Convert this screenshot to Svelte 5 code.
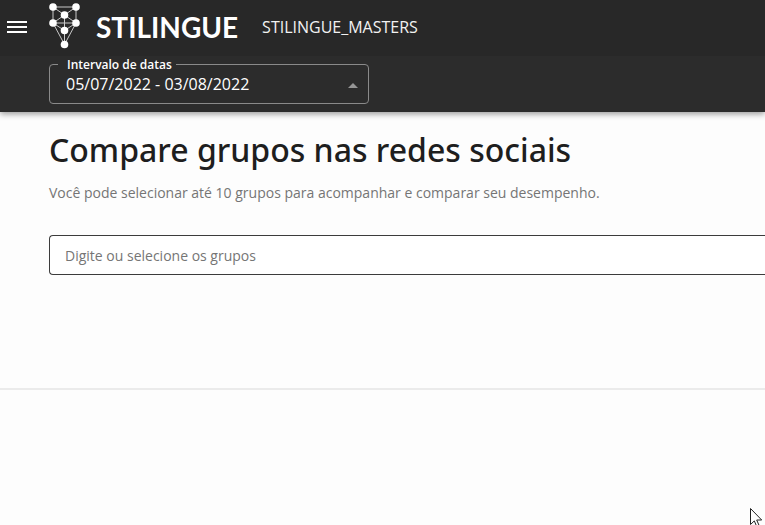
<script>
  let groups = $state('');
  let range = $state('05/07/2022 - 03/08/2022');

  const nodes = [
    [4, 4], [27, 4], [15.5, 12], [4, 20], [27, 20], [15.5, 27.5], [15.5, 41.5]
  ];
  const links = [
    [0, 1], [0, 3], [1, 4], [0, 2], [1, 2], [2, 3], [2, 4], [3, 4],
    [2, 5], [3, 5], [4, 5], [5, 6], [3, 6], [4, 6]
  ];
</script>

<div class="page">
  <header>
    <div class="topbar">
      <button class="menu" aria-label="Abrir menu">
        <svg width="20" height="14" viewBox="0 0 20 14" aria-hidden="true">
          <path d="M0 2h20M0 7h20M0 12h20" stroke="#fff" stroke-width="2" />
        </svg>
      </button>
      <a class="brand" href="#inicio">
        <svg width="31" height="46" viewBox="0 0 31 46" aria-hidden="true">
          {#each links as [a, b]}
            <line x1={nodes[a][0]} y1={nodes[a][1]} x2={nodes[b][0]} y2={nodes[b][1]} />
          {/each}
          {#each nodes as [x, y]}
            <circle cx={x} cy={y} r="3.8" />
          {/each}
        </svg>
        <span>STILINGUE</span>
      </a>
      <span class="account">STILINGUE_MASTERS</span>
    </div>
    <div class="filters">
      <fieldset>
        <legend id="range-label">Intervalo de datas</legend>
        <button class="range" aria-haspopup="dialog" aria-labelledby="range-label range-value">
          <span id="range-value">{range}</span>
          <svg width="10" height="8" viewBox="0 0 10 8" aria-hidden="true">
            <path d="M0 8l5-5 5 5z" fill="#969696" />
          </svg>
        </button>
      </fieldset>
    </div>
  </header>

  <main>
    <section class="compare">
      <h1>Compare grupos nas redes sociais</h1>
      <p>Você pode selecionar até 10 grupos para acompanhar e comparar seu desempenho.</p>
      <input
        type="text"
        aria-label="Grupos"
        placeholder="Digite ou selecione os grupos"
        bind:value={groups}
      />
    </section>
  </main>

  <svg class="pointer" width="12" height="18" viewBox="0 0 12 18" aria-hidden="true">
    <path d="M.5 .5v16l3.8-3.6 2.4 5.6 2.4-1-2.4-5.5h5z" fill="#fff" stroke="#222" />
  </svg>
</div>

<style>
  :global(body) {
    background: #fdfdfd;
  }

  .page {
    position: relative;
    min-height: 100vh;
    overflow: hidden;
    font-family: 'Open Sans', sans-serif;
    color: #1e1e1e;
  }

  header {
    background: #2c2c2c;
    color: #fff;
    box-shadow: 0 2px 6px rgba(0, 0, 0, 0.4);
  }

  .topbar {
    display: flex;
    align-items: center;
    height: 56px;
    padding: 0 7px 2px;
    background: #282828;
    box-sizing: border-box;
  }

  button {
    padding: 0;
    border: 0;
    background: none;
    color: inherit;
    font: inherit;
    cursor: pointer;
  }

  .menu {
    display: flex;
    width: 42px;
  }

  .brand {
    display: flex;
    align-items: center;
    gap: 16px;
    margin-right: 24px;
    color: #fff;
    font: 700 28px/32px Lato, sans-serif;
    text-decoration: none;
  }

  .brand svg {
    margin-bottom: 2px;
  }

  .brand line {
    stroke: #c8c8c8;
    stroke-width: 1;
  }

  .brand circle {
    fill: #fff;
  }

  .account {
    font-size: 16px;
    line-height: 24px;
    color: #f2f2f2;
  }

  .filters {
    padding: 0 48px 8px;
  }

  fieldset {
    box-sizing: border-box;
    max-width: 320px;
    height: 48px;
    margin: 0 0 0 1px;
    padding: 0 10px 0 8px;
    border: 1px solid #8a8a8a;
    border-radius: 4px;
  }

  legend {
    padding: 2px 4px 0 9px;
    font-size: 12px;
    font-weight: 600;
    line-height: 14px;
  }

  .range {
    display: flex;
    align-items: center;
    justify-content: space-between;
    width: 100%;
    padding-left: 8px;
    font-size: 16px;
    line-height: 24px;
  }

  .compare {
    padding: 16px 0 113px 49px;
    border-bottom: 2px solid #ebebeb;
  }

  h1 {
    margin: 0;
    font-family: 'Noto Sans', 'Open Sans', sans-serif;
    font-size: 32px;
    font-weight: 500;
    line-height: 44px;
  }

  p {
    margin: 10px 0 32px;
    font-size: 14px;
    line-height: 21px;
    color: #757575;
  }

  input {
    display: block;
    box-sizing: border-box;
    width: 100%;
    height: 40px;
    padding: 0 15px;
    border: 1px solid #3c3c3c;
    border-right: 0;
    border-radius: 4px 0 0 4px;
    background: #fff;
    color: #1e1e1e;
    font: 14px/20px 'Open Sans', sans-serif;
  }

  input::placeholder {
    color: #757575;
    opacity: 1;
  }

  .pointer {
    position: absolute;
    right: 3px;
    bottom: -1px;
  }
</style>
